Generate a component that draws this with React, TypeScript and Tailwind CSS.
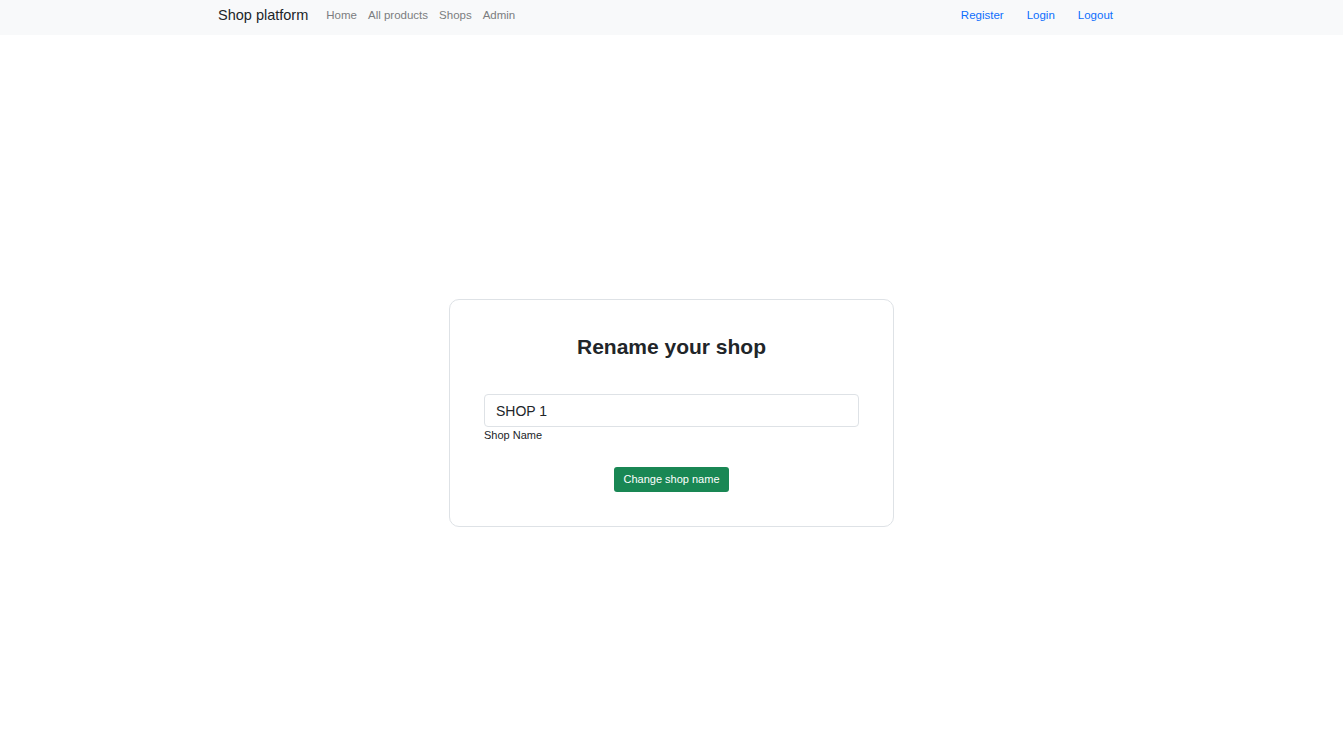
import React, { useState } from 'react';

const font = { fontFamily: '"Liberation Sans", Arial, sans-serif' };

const NavBar: React.FC = () => (
  <nav className="h-[35px] bg-[#f8f9fa] flex items-center pb-[4px]">
    <div className="w-[907px] mx-auto flex items-center">
      <span className="text-[14.5px] text-[#212529] mr-[18px]">Shop platform</span>
      <div className="flex gap-[11px] text-[11.5px] text-[#7b7d80]">
        <span>Home</span>
        <span>All products</span>
        <span>Shops</span>
        <span>Admin</span>
      </div>
      <div className="ml-auto flex gap-[23px] text-[11.5px] text-[#0d6efd] pr-[12px]">
        <span>Register</span>
        <span>Login</span>
        <span>Logout</span>
      </div>
    </div>
  </nav>
);

export default function App() {
  const [name, setName] = useState('SHOP 1');

  return (
    <div className="min-h-[751px] bg-white" style={font}>
      <NavBar />
      <div className="flex justify-center pt-[264px]">
        <div className="w-[445px] h-[228px] border border-[#dee2e6] rounded-[10px] px-[34px] pt-[33px] flex flex-col">
          <h2 className="text-[21px] leading-[27px] font-semibold text-[#212529] text-center">Rename your shop</h2>
          <input
            value={name}
            onChange={(e) => setName(e.target.value)}
            className="mt-[34px] h-[33px] w-full border border-[#dee2e6] rounded-[4px] px-[11px] text-[14px] text-[#212529] focus:outline-none"
          />
          <label className="text-[11px] text-[#212529] mt-[1px] leading-[14px]">Shop Name</label>
          <div className="flex justify-center mt-[25px]">
            <button className="h-[25px] px-[9px] bg-[#198754] text-white text-[11px] rounded-[3px]">
              Change shop name
            </button>
          </div>
        </div>
      </div>
    </div>
  );
}
